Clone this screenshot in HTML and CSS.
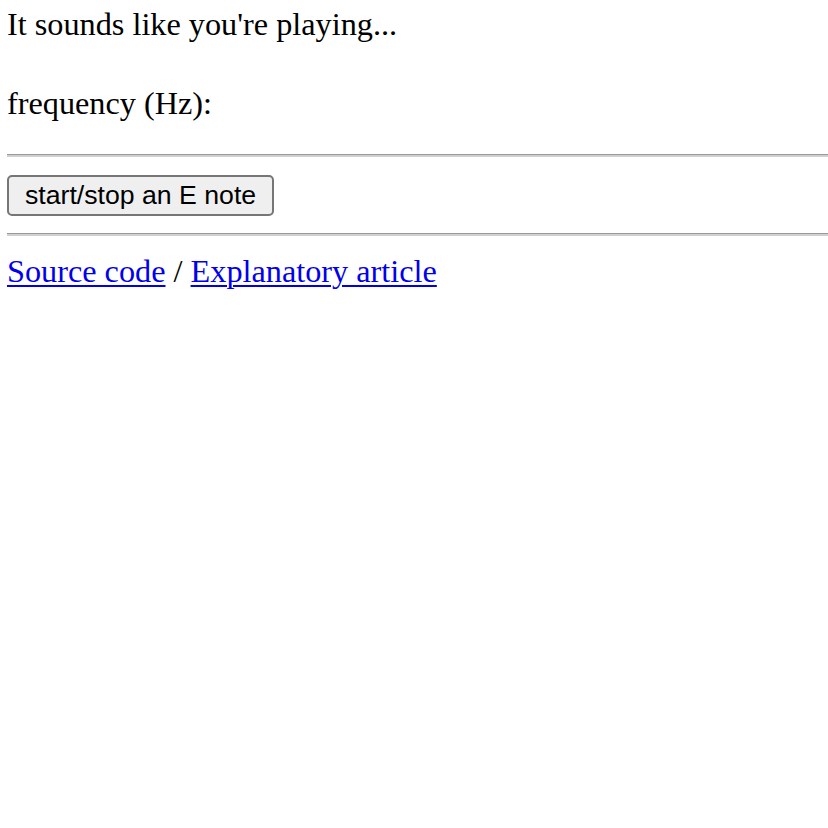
FILE: index.html
```html
<!DOCTYPE html>
<html lang="en">
<head>
<meta charset="utf-8">
<title>Tuner</title>
<link rel="stylesheet" href="styles.css">
</head>
<body>
  <main class="app">
    <p class="line status">It sounds like you're playing...</p>
    <p class="line freq">frequency (Hz):</p>
    <hr class="rule rule-top">
    <div class="controls">
      <button class="note-btn" type="button">start/stop an E note</button>
    </div>
    <hr class="rule rule-bottom">
    <p class="line links"><a href="#">Source code</a> / <a href="#">Explanatory article</a></p>
  </main>
</body>
</html>
```
FILE: styles.css
```css
html, body {
  margin: 0;
  padding: 0;
  background: #fff;
}

body {
  font-family: "Liberation Serif", "Times New Roman", serif;
  font-size: 32.25px;
  color: #000;
  overflow: hidden;
}

.app {
  padding: 6px 0 0 7px;
}

.line {
  margin: 0;
  line-height: 37px;
}

.freq {
  margin-top: 42px;
}

.rule {
  margin: 0 -20px 0 0;
  height: 0;
  border: none;
  border-top: 1px solid #9a9a9a;
  border-bottom: 2px solid #d0d0d0;
}

.rule-top {
  margin-top: 32px;
}

.controls {
  padding: 18px 0 17px;
  line-height: 0;
}

.note-btn {
  font-family: "Liberation Sans", Arial, sans-serif;
  font-size: 26.67px;
  line-height: 33px;
  height: 41px;
  padding: 1px 16px;
  color: #000;
  background: #efefef;
  border: 2px solid #767676;
  border-radius: 5px;
}

.links {
  margin-top: 17px;
}

.links a {
  color: #0000ee;
  text-decoration: underline;
  text-decoration-thickness: 2px;
  text-underline-offset: 3px;
}
```
